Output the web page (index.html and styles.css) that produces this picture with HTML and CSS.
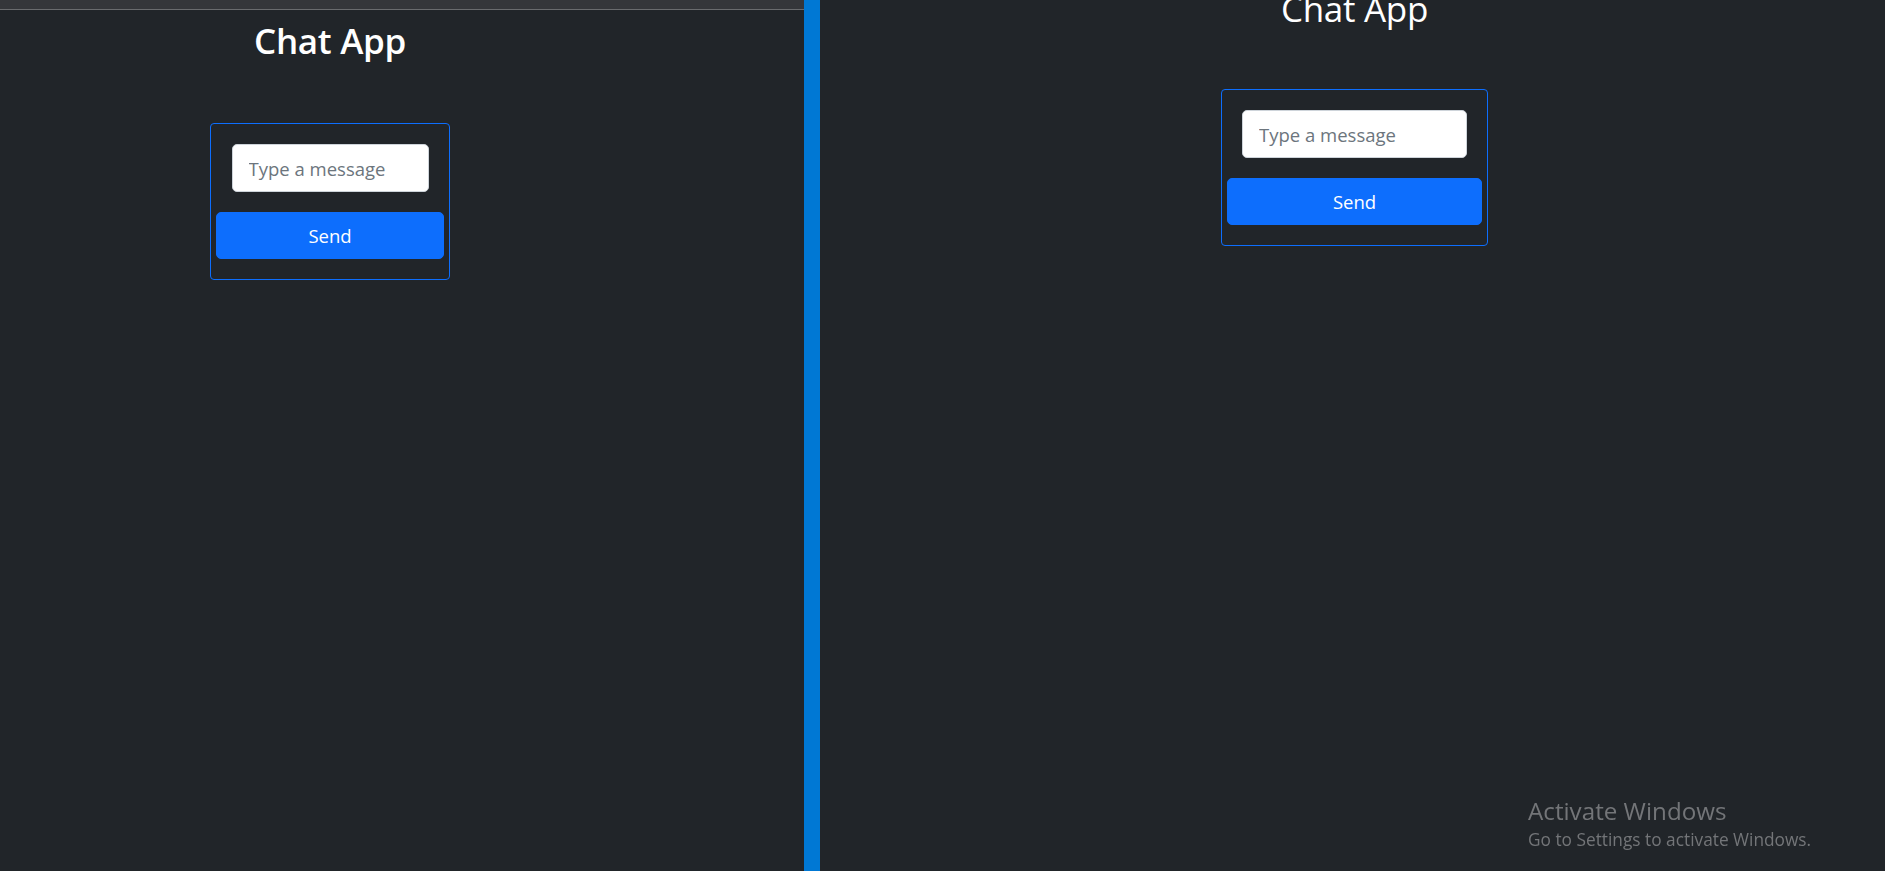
FILE: index.html
```html
<!DOCTYPE html>
<html lang="en">
<head>
<meta charset="utf-8">
<title>Chat App</title>
<link rel="stylesheet" href="styles.css">
</head>
<body>
  <div class="screen">
    <section class="pane pane-left">
      <div class="topbar"></div>
      <div class="viewport viewport-left">
        <h1 class="title title-bold">Chat App</h1>
        <form class="chat-card card-left">
          <input class="msg-input input-left" type="text" placeholder="Type a message">
          <button class="send-btn" type="button">Send</button>
        </form>
      </div>
    </section>
    <div class="divider"></div>
    <section class="pane pane-right">
      <div class="viewport viewport-right">
        <h1 class="title title-regular">Chat App</h1>
        <form class="chat-card card-right">
          <input class="msg-input input-right" type="text" placeholder="Type a message">
          <button class="send-btn" type="button">Send</button>
        </form>
      </div>
    </section>
  </div>
  <div class="activate">
    <div class="activate-title">Activate Windows</div>
    <div class="activate-sub">Go to Settings to activate Windows.</div>
  </div>
</body>
</html>
```

FILE: styles.css
```css
* { box-sizing: border-box; }

html, body {
  margin: 0;
  padding: 0;
  width: 100%;
  height: 100%;
  background: #212529;
  overflow: hidden;
  font-family: "Open Sans", "Noto Sans", sans-serif;
}

.screen {
  display: flex;
  width: 1885px;
  height: 871px;
}

.pane {
  background: #212529;
  overflow: hidden;
}

.pane-left {
  width: 804px;
  flex: 0 0 804px;
  display: flex;
  flex-direction: column;
}

.topbar {
  height: 10px;
  flex: 0 0 10px;
  background: #35363a;
  border-bottom: 1px solid #6a6b6e;
}

.divider {
  width: 16px;
  flex: 0 0 16px;
  background: #0078d4;
}

.pane-right {
  flex: 1;
  display: flex;
  flex-direction: column;
}

.viewport {
  display: flex;
  flex-direction: column;
  align-items: center;
}

.viewport-left {
  width: 660px;
  padding-top: 10px;
}

.viewport-right {
  width: 1069px;
  margin-top: -12px;
}

.title {
  margin: 0;
  color: #ffffff;
  font-size: 35px;
  line-height: 42px;
  letter-spacing: -0.3px;
}

.title-bold { font-weight: 600; }
.title-regular { font-weight: 400; }

.chat-card {
  display: flex;
  flex-direction: column;
  align-items: center;
  gap: 20px;
  border: 1px solid #0d6efd;
  border-radius: 4px;
  padding: 20px 5px 20px;
  margin: 0;
}

.card-left {
  width: 240px;
  margin-top: 61px;
}

.card-right {
  width: 267px;
  margin-top: 59px;
}

.msg-input {
  height: 48px;
  background: #ffffff;
  border: 1px solid #ced4da;
  border-radius: 5px;
  padding: 0 16px;
  font-family: "Open Sans", "Noto Sans", sans-serif;
  font-size: 18.5px;
  color: #212529;
  outline: none;
}

.msg-input::placeholder {
  color: #6c757d;
  opacity: 1;
}

.input-left { width: 197px; }
.input-right { width: 225px; }

.send-btn {
  width: 100%;
  height: 47px;
  background: #0d6efd;
  border: 1px solid #0d6efd;
  border-radius: 5px;
  color: #ffffff;
  font-family: "Open Sans", "Noto Sans", sans-serif;
  font-size: 18.5px;
  padding: 0;
  cursor: pointer;
}

.activate {
  position: fixed;
  left: 1528px;
  top: 794px;
  color: #737578;
  pointer-events: none;
}

.activate-title {
  font-size: 24.2px;
  line-height: 34px;
}

.activate-sub {
  font-size: 17.3px;
  line-height: 24px;
}
```
